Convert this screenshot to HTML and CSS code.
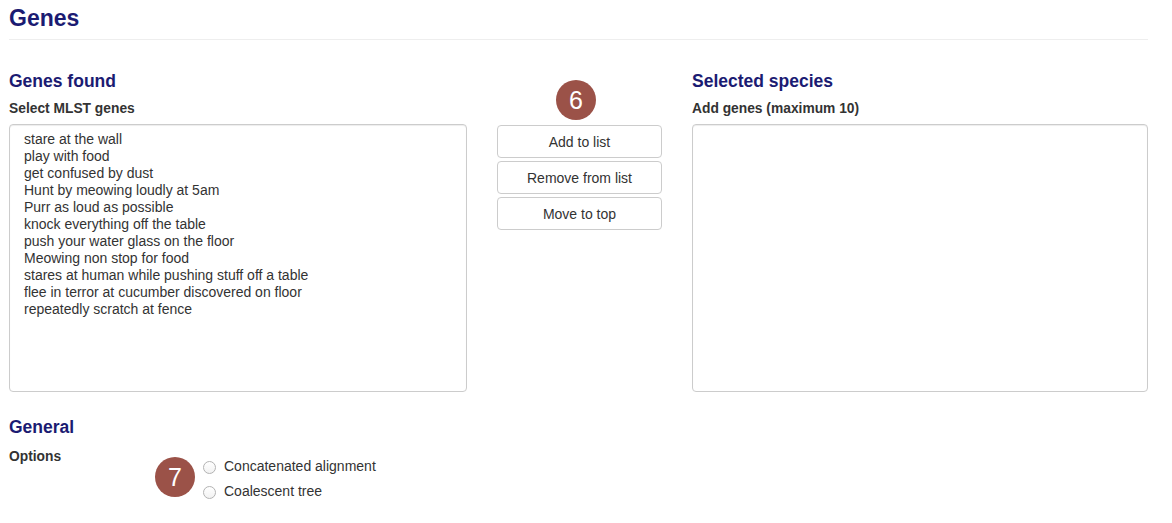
FILE: index.html
```html
<!DOCTYPE html>
<html lang="en">
<head>
<meta charset="utf-8">
<title>Genes</title>
<link rel="stylesheet" href="styles.css">
</head>
<body>
<div class="page">
  <h1 class="page-title">Genes</h1>
  <hr class="divider">

  <div class="genes-row">
    <div class="col">
      <h2 class="section-title">Genes found</h2>
      <div class="field-label">Select MLST genes</div>
      <div class="list-box">
        <div class="list-item">stare at the wall</div>
        <div class="list-item">play with food</div>
        <div class="list-item">get confused by dust</div>
        <div class="list-item">Hunt by meowing loudly at 5am</div>
        <div class="list-item">Purr as loud as possible</div>
        <div class="list-item">knock everything off the table</div>
        <div class="list-item">push your water glass on the floor</div>
        <div class="list-item">Meowing non stop for food</div>
        <div class="list-item">stares at human while pushing stuff off a table</div>
        <div class="list-item">flee in terror at cucumber discovered on floor</div>
        <div class="list-item">repeatedly scratch at fence</div>
      </div>
    </div>

    <div class="col col-actions">
      <div class="badge badge-six">6</div>
      <button class="btn" type="button">Add to list</button>
      <button class="btn" type="button">Remove from list</button>
      <button class="btn" type="button">Move to top</button>
    </div>

    <div class="col">
      <h2 class="section-title">Selected species</h2>
      <div class="field-label">Add genes (maximum 10)</div>
      <div class="list-box"></div>
    </div>
  </div>

  <h2 class="section-title general-title">General</h2>
  <div class="options-row">
    <div class="field-label">Options</div>
    <div class="radio-group">
      <div class="badge badge-seven">7</div>
      <label class="radio"><input type="radio" name="opt"><span>Concatenated alignment</span></label>
      <label class="radio"><input type="radio" name="opt"><span>Coalescent tree</span></label>
    </div>
  </div>
</div>
</body>
</html>
```

FILE: styles.css
```css
* {
  box-sizing: border-box;
}

html, body {
  margin: 0;
  padding: 0;
  background: #ffffff;
}

body {
  font-family: "Liberation Sans", Arial, Helvetica, sans-serif;
  font-size: 14px;
  color: #333333;
}

.page {
  width: 1139px;
  margin-left: 9px;
}

.page-title {
  margin: 5px 0 0 0;
  font-size: 23px;
  line-height: 26px;
  font-weight: bold;
  color: #1b1b72;
}

.divider {
  margin: 8px 0 31px 0;
  border: 0;
  border-top: 1px solid #eeeeee;
  height: 0;
}

.genes-row {
  display: grid;
  grid-template-columns: 458px 165px 456px;
  column-gap: 30px;
}

.col {
  display: flex;
  flex-direction: column;
}

.section-title {
  margin: 0;
  font-size: 17.5px;
  line-height: 20px;
  font-weight: bold;
  color: #1b1b72;
}

.field-label {
  margin-top: 10px;
  font-size: 13.8px;
  line-height: 16px;
  font-weight: bold;
  color: #333333;
}

.list-box {
  margin-top: 7px;
  height: 268px;
  border: 1px solid #cccccc;
  border-radius: 4px;
  box-shadow: inset 0 1px 1px rgba(0, 0, 0, 0.075);
  padding: 6px 14px;
  background: #ffffff;
}

.list-item {
  font-size: 14px;
  line-height: 17px;
  color: #333333;
  white-space: nowrap;
}

.col-actions {
  align-items: stretch;
}

.badge {
  width: 40px;
  height: 40px;
  border-radius: 50%;
  background: #9b5248;
  color: #ffffff;
  font-size: 25px;
  line-height: 40px;
  text-align: center;
  font-family: "Liberation Sans", Arial, sans-serif;
}

.badge-six {
  align-self: flex-start;
  margin: 9px 0 0 59px;
}

.btn {
  height: 33px;
  margin-top: 3px;
  padding: 0;
  border: 1px solid #cccccc;
  border-radius: 4px;
  background: #ffffff;
  color: #333333;
  font-family: "Liberation Sans", Arial, sans-serif;
  font-size: 14px;
  line-height: 20px;
  text-align: center;
}

.badge-six + .btn {
  margin-top: 5px;
}

.general-title {
  margin-top: 25px;
}

.options-row {
  display: grid;
  grid-template-columns: 194px 1fr;
  margin-top: 12px;
}

.options-row .field-label {
  margin-top: 0;
}

.radio-group {
  position: relative;
  margin-top: 5px;
  display: flex;
  flex-direction: column;
}

.badge-seven {
  position: absolute;
  left: -48px;
  top: 3px;
}

.radio {
  display: flex;
  align-items: center;
  height: 25px;
  font-size: 14px;
  line-height: 25px;
  color: #333333;
}

.radio input {
  -webkit-appearance: none;
  appearance: none;
  width: 13px;
  height: 13px;
  margin: 0 8px 0 0;
  border: 1px solid #b3b3b3;
  border-radius: 50%;
  background: linear-gradient(#ffffff, #f2f2f2);
  position: relative;
  top: 1px;
}
```
